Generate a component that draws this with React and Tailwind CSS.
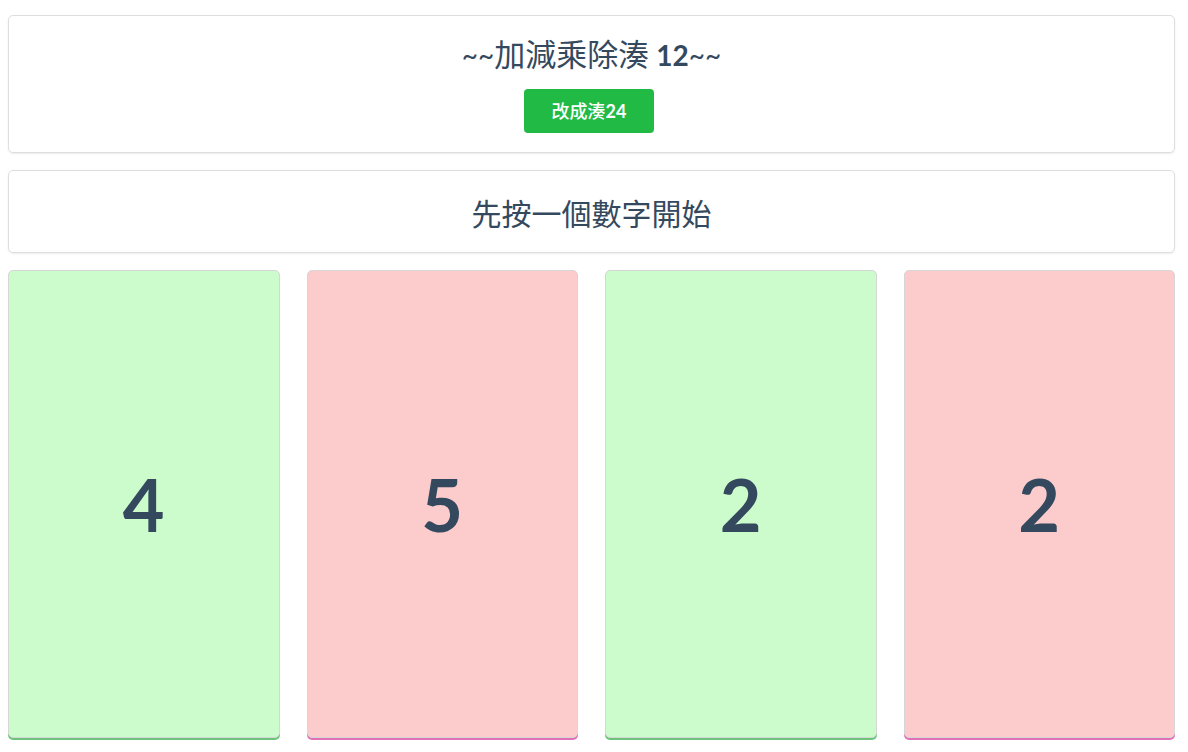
export default function App() {
  const cards = [
    { n: 4, bg: 'bg-[#ccfccc]', line: 'shadow-[0_2px_0_#6cc47a]' },
    { n: 5, bg: 'bg-[#fccccc]', line: 'shadow-[0_2px_0_#e070b8]' },
    { n: 2, bg: 'bg-[#ccfccc]', line: 'shadow-[0_2px_0_#6cc47a]' },
    { n: 2, bg: 'bg-[#fccccc]', line: 'shadow-[0_2px_0_#e070b8]' },
  ];

  return (
    <div className="w-[1188px] h-[752px] bg-white pl-[8px] pr-[13px] pt-[15px] text-[#34495e]" style={{ fontFamily: "Lato, 'Noto Sans CJK TC', sans-serif" }}>
      {/* title */}
      <div className="h-[138px] rounded-[5px] border border-[#dedede] shadow-[0_1px_2px_rgba(0,0,0,0.08)] flex flex-col items-center pt-[19px]">
        <h1 className="text-[28px] leading-[38px]">
          ~~<span className="text-[31px] leading-[38px]">加減乘除湊</span> <span className="font-bold">12</span>~~
        </h1>
        <button className="mt-[15px] mr-[5px] w-[130px] h-[44px] rounded-[4px] bg-[#21ba45] text-white text-[18px] font-bold">
          <span className="font-medium">改成湊</span>24
        </button>
      </div>

      {/* hint */}
      <div className="mt-[17px] h-[83px] rounded-[5px] border border-[#dedede] shadow-[0_1px_2px_rgba(0,0,0,0.08)] flex items-center justify-center">
        <p className="text-[30px] leading-[38px] mt-[3px]">先按一個數字開始</p>
      </div>

      {/* numbers */}
      <div className="mt-[17px] grid grid-cols-4 gap-[27px]">
        {cards.map((c, i) => (
          <div key={i} className={`h-[468px] rounded-[5px] border border-[#d6d6d6] flex items-center justify-center ${c.bg} ${c.line}`}>
            <span className="text-[72px] font-bold leading-none">{c.n}</span>
          </div>
        ))}
      </div>
    </div>
  );
}
